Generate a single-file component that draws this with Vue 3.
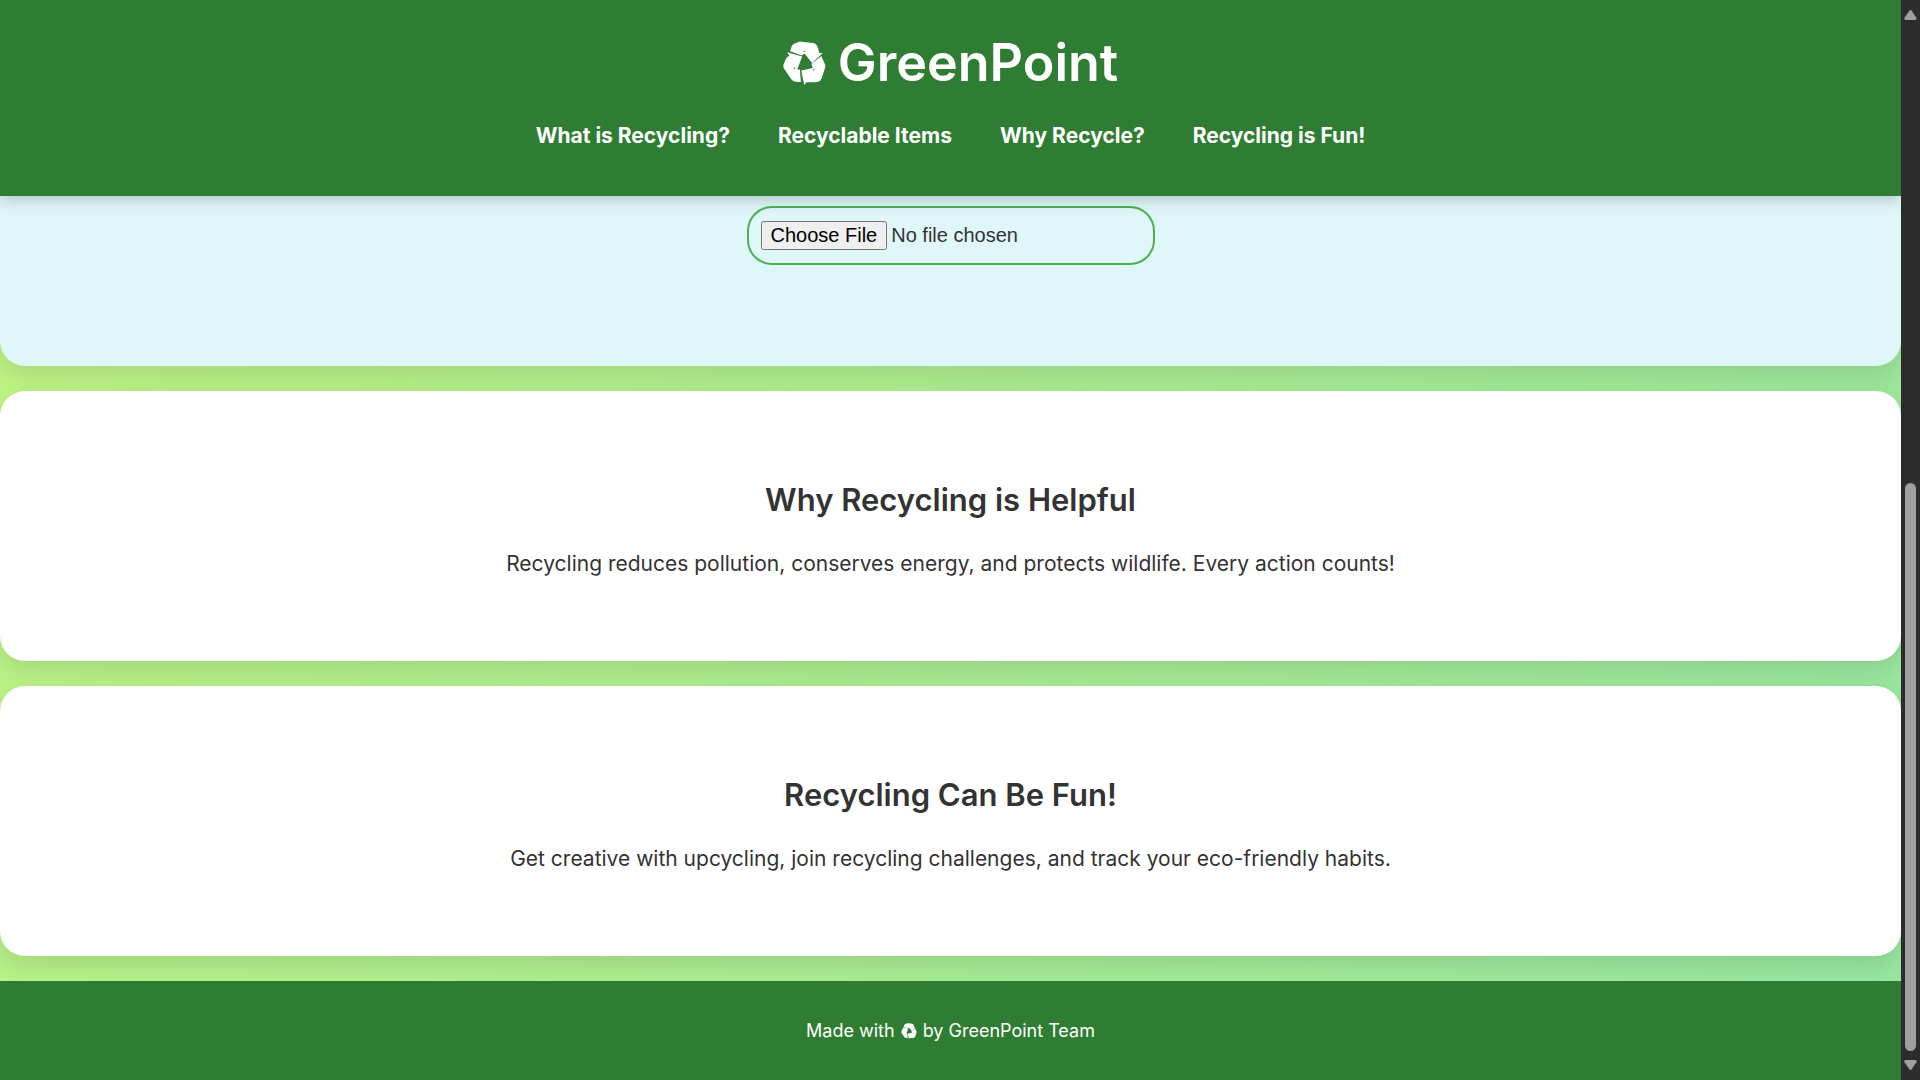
<template>
    <div class="window">
        <div class="page">
            <header class="header">
                <h1 class="logo">
                    <svg class="logo-icon" viewBox="36 35 130 134" aria-hidden="true">
                        <path :d="recyclePath" fill="currentColor" />
                        <path :d="foldPath" fill="#2e7d32" />
                    </svg>
                    GreenPoint
                </h1>
                <nav class="nav">
                    <a v-for="link in links" :key="link.href" :href="link.href">{{ link.text }}</a>
                </nav>
            </header>

            <main class="content">
                <section class="upload">
                    <input type="file" class="file" aria-label="Upload a photo" @change="onFileChange">
                </section>
                <section v-for="card in cards" :id="card.id" :key="card.id" class="card">
                    <h2>{{ card.title }}</h2>
                    <p>{{ card.text }}</p>
                </section>
            </main>

            <footer class="footer">
                Made with
                <svg class="footer-icon" viewBox="36 35 130 134" aria-hidden="true">
                    <path :d="recyclePath" fill="currentColor" />
                </svg>
                by GreenPoint Team
            </footer>
        </div>

        <div class="scrollbar" aria-hidden="true">
            <svg class="arrow" viewBox="0 0 13 10">
                <path d="M5.4.8Q6.5-.6 7.6.8L12.5 7.8Q13.2 10 11.4 10H1.6Q-.2 10 .5 7.8Z" />
            </svg>
            <div class="track">
                <div class="thumb"></div>
            </div>
            <svg class="arrow" viewBox="0 0 13 10">
                <path d="M5.4 9.2Q6.5 10.6 7.6 9.2L12.5 2.2Q13.2 0 11.4 0H1.6Q-.2 0 .5 2.2Z" />
            </svg>
        </div>
    </div>
</template>

<script setup>
import { ref } from 'vue';

const file = ref(null);

const links = [
    { href: '#what', text: 'What is Recycling?' },
    { href: '#items', text: 'Recyclable Items' },
    { href: '#why', text: 'Why Recycle?' },
    { href: '#fun', text: 'Recycling is Fun!' }
];

const cards = [
    {
        id: 'why',
        title: 'Why Recycling is Helpful',
        text: 'Recycling reduces pollution, conserves energy, and protects wildlife. Every action counts!'
    },
    {
        id: 'fun',
        title: 'Recycling Can Be Fun!',
        text: 'Get creative with upcycling, join recycling challenges, and track your eco-friendly habits.'
    }
];

// three arrows chasing each other: top, left, right
const recyclePath = 'M57 66L62 51Q65 43 75 41L85 37Q91 35 97 38L128 41Q134 42 138 48L143 58L145 71L156 72L124 102L101 73L93 79Z'
    + 'M48 69L94 82L79 122L87 122L90 160L73 159Q65 158 60 151L38 118Q35 111 38 104L46 86L55 80Z'
    + 'M152 81L163 105Q166 111 163 119L153 149Q150 157 142 159L133 161L107 161L100 169L91 125L126 117L122 105Z';
// small paper folds
const foldPath = 'M97 68L101 64L106 67Z M66 117L71 116L73 122Z M125 124L131 119L131 125Z';

const onFileChange = (e) => {
    file.value = e.target.files[0];
};
</script>

<style>
body {
    margin: 0;
}
</style>

<style scoped>
.window {
    display: flex;
    min-height: 100vh;
    font-family: Inter, "Noto Sans", sans-serif;
    color: #333;
}
.page {
    flex: 1;
    display: flex;
    flex-direction: column;
    background: linear-gradient(120deg, #c2f582, #96e6a1);
    text-align: center;
    overflow: hidden;
}
.header {
    position: relative;
    padding: 25px 20px 45px;
    background: #2e7d32;
    color: #fff;
    box-shadow: 0 4px 15px rgba(0, 0, 0, 0.2);
}
.logo {
    display: flex;
    align-items: center;
    justify-content: center;
    gap: 12px;
    margin: 0 0 21px;
    font-size: 52px;
    font-weight: 600;
    line-height: 75px;
}
.logo-icon {
    width: 43px;
    height: 44px;
}
.nav {
    display: flex;
    flex-wrap: wrap;
    justify-content: center;
    gap: 0 48px;
    font-size: 21px;
    font-weight: 700;
    line-height: 30px;
}
.nav a {
    color: #fff;
    text-decoration: none;
}
.content {
    flex: 1;
    display: flex;
    flex-direction: column;
    gap: 25px;
    padding-bottom: 25px;
}
.upload {
    display: flex;
    justify-content: center;
    padding: 10px 20px 101px;
    background: #e0f7fa;
    border-radius: 0 0 25px 25px;
    box-shadow: 0 8px 25px rgba(0, 0, 0, 0.12);
}
.file {
    box-sizing: border-box;
    width: 408px;
    max-width: 100%;
    padding: 13px 12px;
    border: 2px solid #4caf50;
    border-radius: 25px;
    font-family: "Liberation Sans", Arial, sans-serif;
    font-size: 20px;
    color: #333;
}
.file::file-selector-button {
    padding: 1px 8px;
}
.card {
    padding: 80px 20px;
    background: #fff;
    border-radius: 25px;
    box-shadow: 0 8px 25px rgba(0, 0, 0, 0.12);
}
.card h2 {
    margin: 0 0 17px;
    font-size: 31px;
    font-weight: 600;
    line-height: 58px;
}
.card p {
    margin: 0;
    font-size: 21px;
    line-height: 35px;
}
.footer {
    display: flex;
    align-items: center;
    justify-content: center;
    gap: 6px;
    padding: 32px 20px;
    background: #2e7d32;
    color: #fff;
    font-size: 18px;
    line-height: 35px;
}
.footer-icon {
    width: 16px;
    height: 16px;
}
.scrollbar {
    display: flex;
    flex-direction: column;
    align-items: center;
    width: 19px;
    box-sizing: border-box;
    padding: 10px 0;
    background: #2c2c2c;
}
.arrow {
    width: 13px;
    height: 10px;
    fill: #9f9f9f;
}
.track {
    flex: 1;
    display: flex;
    flex-direction: column;
    justify-content: flex-end;
    padding: 16px 0 9px;
}
.thumb {
    width: 11px;
    height: 56%;
    border-radius: 6px;
    background: #9f9f9f;
}
</style>
